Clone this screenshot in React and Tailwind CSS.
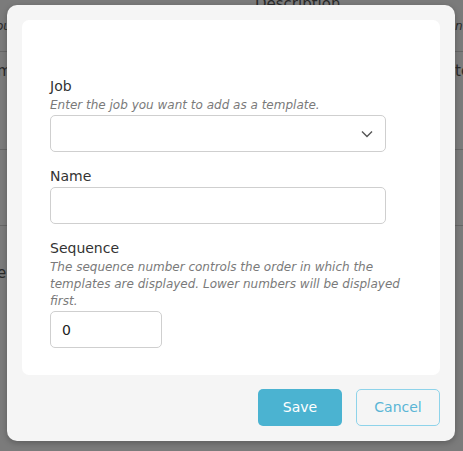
import React from 'react';

const font = { fontFamily: '"DejaVu Sans", "Liberation Sans", sans-serif' };

const Field = ({ label, hint, children }) => (
  <div className="flex flex-col">
    <label className="text-[14px] leading-[20px] font-medium text-[#333]">{label}</label>
    {hint && <p className="mt-px text-[12px] leading-[17px] italic text-[#7a7a7a]">{hint}</p>}
    <div className="mt-px">{children}</div>
  </div>
);

const App = () => {
  return (
    <div className="relative w-full h-[451px] overflow-hidden bg-[#7b7b7b]" style={font}>
      {/* Page behind the overlay */}
      <div className="text-[#2a2a2a]">
        <div className="h-[52px] border-b border-[#666] relative">
          <span className="absolute left-[255px] -top-[7px] text-[15px] font-medium">Description</span>
          <span className="absolute -left-[4px] top-[17px] text-[12px] italic">ou</span>
          <span className="absolute left-[455px] top-[17px] text-[12px] italic">nt</span>
        </div>
        <div className="h-[98px] border-b border-[#666] relative">
          <span className="absolute -left-[3px] top-[8px] text-[15px]">m</span>
          <span className="absolute left-[455px] top-[8px] text-[15px]">te</span>
        </div>
        <div className="h-[76px] border-b border-[#666]" />
        <div className="h-[60px] relative">
          <span className="absolute -left-[3px] top-[36px] text-[15px]">e</span>
        </div>
      </div>

      {/* Modal */}
      <div className="absolute left-[7px] top-[5px] w-[448px] h-[436px] bg-[#f5f5f5] rounded-[10px] shadow-[0_2px_6px_rgba(0,0,0,0.25)] p-[15px] flex flex-col">
        <div className="bg-white rounded-[7px] h-[356px] pl-[28px] pr-[22px] pt-[56px] flex flex-col gap-[14px]">
          <Field label="Job" hint="Enter the job you want to add as a template.">
            <div className="w-[336px] h-[37px] border border-[#cfcfcf] rounded-[5px] flex items-center justify-end pr-[12px]">
              <svg width="12" height="8" viewBox="0 0 12 8" fill="none" stroke="#555" strokeWidth="1.4">
                <path d="M1 1.5l5 5 5-5" />
              </svg>
            </div>
          </Field>
          <Field label="Name">
            <input className="w-[336px] h-[37px] border border-[#cfcfcf] rounded-[5px] px-[12px] text-[14px] outline-none" />
          </Field>
          <Field
            label="Sequence"
            hint="The sequence number controls the order in which the templates are displayed. Lower numbers will be displayed first."
          >
            <input
              defaultValue="0"
              className="w-[112px] h-[37px] border border-[#cfcfcf] rounded-[5px] px-[11px] text-[14px] text-[#222] outline-none"
            />
          </Field>
        </div>
        <div className="flex justify-end gap-[14px] mt-[14px]">
          <button className="w-[84px] h-[37px] rounded-[5px] bg-[#4bb3d1] text-white text-[14px] font-medium">Save</button>
          <button className="w-[84px] h-[37px] rounded-[5px] border border-[#8ed3ea] text-[#5ab5d5] text-[14px]">Cancel</button>
        </div>
      </div>
    </div>
  );
};

export default App;
